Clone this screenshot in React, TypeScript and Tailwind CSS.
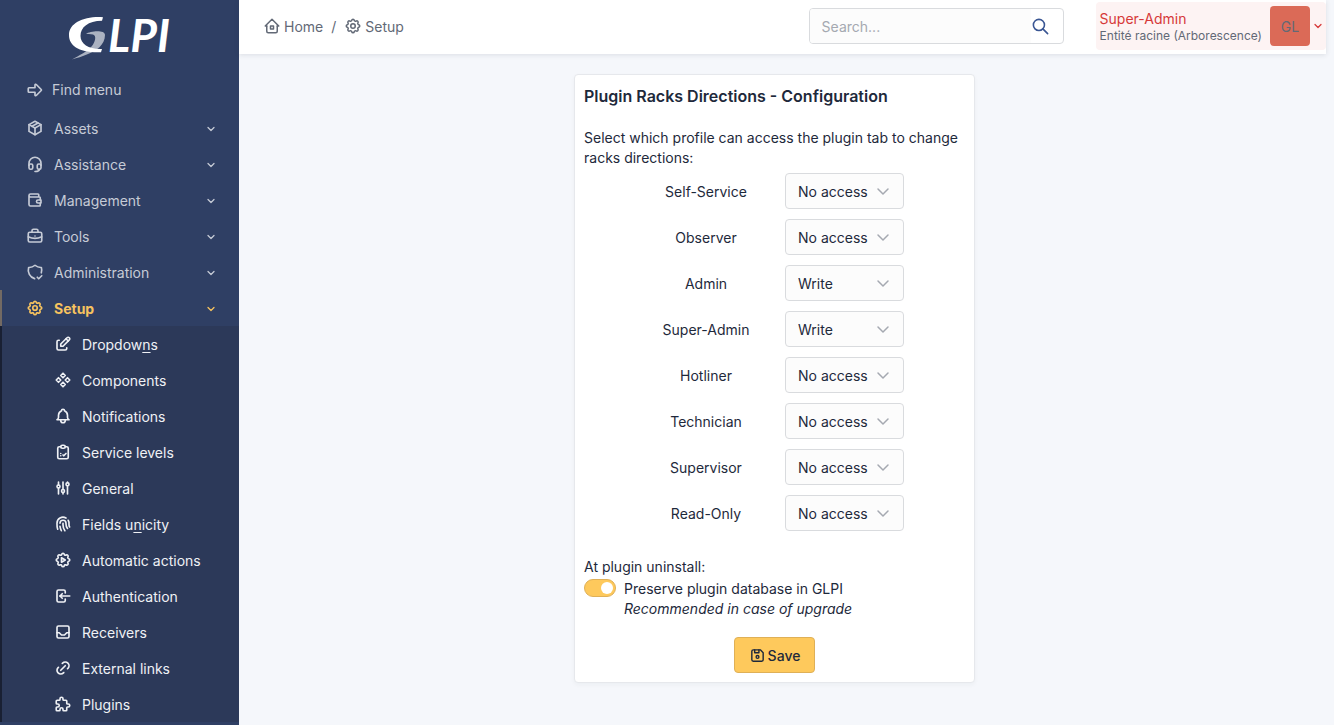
import React from "react";
import {
  TbAdjustments, TbArrowBigRight, TbBell, TbBriefcase, TbCheckupList, TbChevronDown, TbComponents,
  TbDeviceFloppy, TbEdit, TbFingerprint, TbHeadset, TbHome2, TbInbox, TbLink, TbLogin,
  TbPackage, TbPuzzle, TbSearch, TbSettings, TbSettingsAutomation, TbShieldCheck, TbWallet,
} from "react-icons/tb";
import type { IconType } from "react-icons";

const menu: { label: string; icon: IconType; active?: boolean }[] = [
  { label: "Assets", icon: TbPackage },
  { label: "Assistance", icon: TbHeadset },
  { label: "Management", icon: TbWallet },
  { label: "Tools", icon: TbBriefcase },
  { label: "Administration", icon: TbShieldCheck },
  { label: "Setup", icon: TbSettings, active: true },
];

const submenu: { label: React.ReactNode; key: string; icon: IconType }[] = [
  { key: "dropdowns", label: <>Dropdow<u className="underline-offset-2">n</u>s</>, icon: TbEdit },
  { key: "components", label: "Components", icon: TbComponents },
  { key: "notifications", label: "Notifications", icon: TbBell },
  { key: "sla", label: "Service levels", icon: TbCheckupList },
  { key: "general", label: "General", icon: TbAdjustments },
  { key: "unicity", label: <>Fields u<u className="underline-offset-2">n</u>icity</>, icon: TbFingerprint },
  { key: "cron", label: "Automatic actions", icon: TbSettingsAutomation },
  { key: "auth", label: "Authentication", icon: TbLogin },
  { key: "receivers", label: "Receivers", icon: TbInbox },
  { key: "links", label: "External links", icon: TbLink },
  { key: "plugins", label: "Plugins", icon: TbPuzzle },
];

const profiles = [
  { name: "Self-Service", right: "No access" },
  { name: "Observer", right: "No access" },
  { name: "Admin", right: "Write" },
  { name: "Super-Admin", right: "Write" },
  { name: "Hotliner", right: "No access" },
  { name: "Technician", right: "No access" },
  { name: "Supervisor", right: "No access" },
  { name: "Read-Only", right: "No access" },
];

function Logo() {
  return (
    <svg width="112" height="48" viewBox="-5 0 112 48" className="overflow-visible" role="img" aria-label="GLPI">
      <path d="M17 18 C21 15 36 13.500 36 19 C36 29 27 35 19 38 C13 40.500 8 42 3 43.500 C10 39.500 19 35 23 30 C26 26 28 20 24 18.500 C22 17.800 20 17.800 17 18Z" fill="#abb2c1" />
      <path d="M34 1.200 C15 0 0 7 0 19 C0 30 10 37 32 36.200 L33 33 C20 33.500 11.500 28 11.500 20 C11.500 11 19 5 33 4.700Z" fill="#fff" />
      <text x="39" y="36" fill="#fff" className="font-[Lato] text-[46px] font-bold italic">LPI</text>
    </svg>
  );
}

function Sidebar() {
  return (
    <aside className="w-[239px] shrink-0 bg-[#2f3f64] text-[#c6cbd6]">
      <a href="#" className="flex h-[60px] justify-center pt-4">
        <Logo />
      </a>
      <nav>
        <button type="button" className="mt-3 flex h-9 w-full items-center gap-2 pl-[26px]">
          <TbArrowBigRight size={18} strokeWidth={2.2} />
          Find menu
        </button>
        <ul className="mt-[2px]">
          {menu.map(({ label, icon: Icon, active }) => (
            <li key={label}>
              <a
                href="#"
                className={
                  active
                    ? "flex h-9 items-center border-l-2 border-[#736a63] pt-[2px] pr-[22px] pl-6 font-bold text-[#f7c35f]"
                    : "flex h-9 items-center border-l-2 border-transparent pt-[2px] pr-[22px] pl-6"
                }
              >
                <Icon size={18} strokeWidth={2.2} className="mr-[10px] mb-[3px]" />
                <span className="flex-1">{label}</span>
                <TbChevronDown size={12} strokeWidth={2.5} />
              </a>
            </li>
          ))}
        </ul>
        <ul className="border-l-2 border-[#192033] bg-[#2c3959] text-[#eff1f5]">
          {submenu.map(({ key, label, icon: Icon }) => (
            <li key={key}>
              <a href="#" className="flex h-9 items-center pt-[2px] pl-[52px]">
                <Icon size={18} strokeWidth={2.2} className="mr-[10px] mb-[3px]" />
                <span>{label}</span>
              </a>
            </li>
          ))}
        </ul>
      </nav>
    </aside>
  );
}

function Header() {
  return (
    <header className="mr-2 flex h-[54px] items-center bg-white pl-6 text-[#626976] shadow-[0_1px_5px_rgba(30,41,59,0.12)]">
      <nav aria-label="Breadcrumb" className="flex items-center">
        <a href="#" className="flex items-center gap-[3px]">
          <TbHome2 size={18} className="mb-[3px]" />
          Home
        </a>
        <span className="px-2">/</span>
        <a href="#" className="flex items-center gap-[3px]">
          <TbSettings size={18} className="mb-[3px]" />
          Setup
        </a>
      </nav>
      <form className="mr-8 mb-[2px] ml-auto flex h-9 w-[255px] overflow-hidden rounded border border-[#d9dbde]">
        <input
          type="text"
          aria-label="Search"
          placeholder="Search..."
          className="min-w-0 flex-1 bg-[#fcfcfc] px-3 pt-[2px] outline-none placeholder:text-[#a5a9b1]"
        />
        <button type="button" aria-label="Run search" className="flex w-8 items-center text-[#3a5693]">
          <TbSearch size={19} />
        </button>
      </form>
      <button type="button" className="mb-[2px] flex h-12 items-center rounded bg-[#fdf3f3] pr-[2px] pl-1 text-left">
        <span className="mr-2 pt-[2px]">
          <span className="block leading-[18px] text-[#d63939]">Super-Admin</span>
          <span className="block text-xs leading-4">Entité racine (Arborescence)</span>
        </span>
        <span className="flex size-10 items-center justify-center rounded bg-[#db6a57] pt-[2px]">GL</span>
        <TbChevronDown size={12} strokeWidth={2.5} className="ml-[2px] text-[#d63939]" />
      </button>
    </header>
  );
}

export default function App() {
  return (
    <div className="flex min-h-screen bg-[#f5f7fb] font-[Inter,sans-serif] text-sm leading-5 text-[#1e293b]">
      <Sidebar />
      <div className="min-w-0 flex-1">
        <Header />
        <main className="flex justify-center pt-5 pr-6">
          <form className="w-[401px] rounded border border-[#e6e8ec] bg-white px-[9px] pt-[11px] pb-[9px] shadow-[0_2px_4px_rgba(30,41,59,0.04)]">
            <h1 className="text-base leading-5 font-semibold">Plugin Racks Directions - Configuration</h1>
            <p className="mt-[22px]">Select which profile can access the plugin tab to change racks directions:</p>
            <div className="mt-[5px] flex flex-col gap-[10px] pr-[18px]">
              {profiles.map(({ name, right }) => (
                <div key={name} className="flex items-center justify-center">
                  <label htmlFor={name} className="w-[158px] pt-[2px] text-center">{name}</label>
                  <div className="relative">
                    <select
                      id={name}
                      defaultValue={right}
                      className="h-9 w-[119px] appearance-none rounded border border-[#d9dbde] bg-[#fcfcfc] pt-[2px] pr-8 pl-3"
                    >
                      <option>No access</option>
                      <option>Read</option>
                      <option>Write</option>
                    </select>
                    <svg
                      className="pointer-events-none absolute top-[10px] right-[13px]"
                      width="16" height="16" viewBox="0 0 16 16" fill="none" stroke="#a5a9b1" strokeWidth="1.5" strokeLinecap="round" strokeLinejoin="round"
                    >
                      <path d="M3 6l5 5l5 -5" />
                    </svg>
                  </div>
                </div>
              ))}
            </div>
            <p className="mt-[26px]">At plugin uninstall:</p>
            <label className="mt-[2px] flex gap-2">
              <input type="checkbox" defaultChecked className="peer sr-only" />
              <span className="flex h-[18px] w-8 items-center justify-end rounded-full border border-[#dfb057] bg-[#fec95c] px-[2px]">
                <span className="size-3 rounded-full bg-white" />
              </span>
              <span>
                Preserve plugin database in GLPI
                <br />
                <i>Recommended in case of upgrade</i>
              </span>
            </label>
            <div className="mt-[18px] flex justify-center">
              <button
                type="button"
                className="flex h-9 items-center gap-[2px] rounded border border-[#dfb057] bg-[#fec95c] px-[14px] pt-[2px] font-medium"
              >
                <TbDeviceFloppy size={17} className="mb-[2px]" />
                Save
              </button>
            </div>
          </form>
        </main>
      </div>
    </div>
  );
}
